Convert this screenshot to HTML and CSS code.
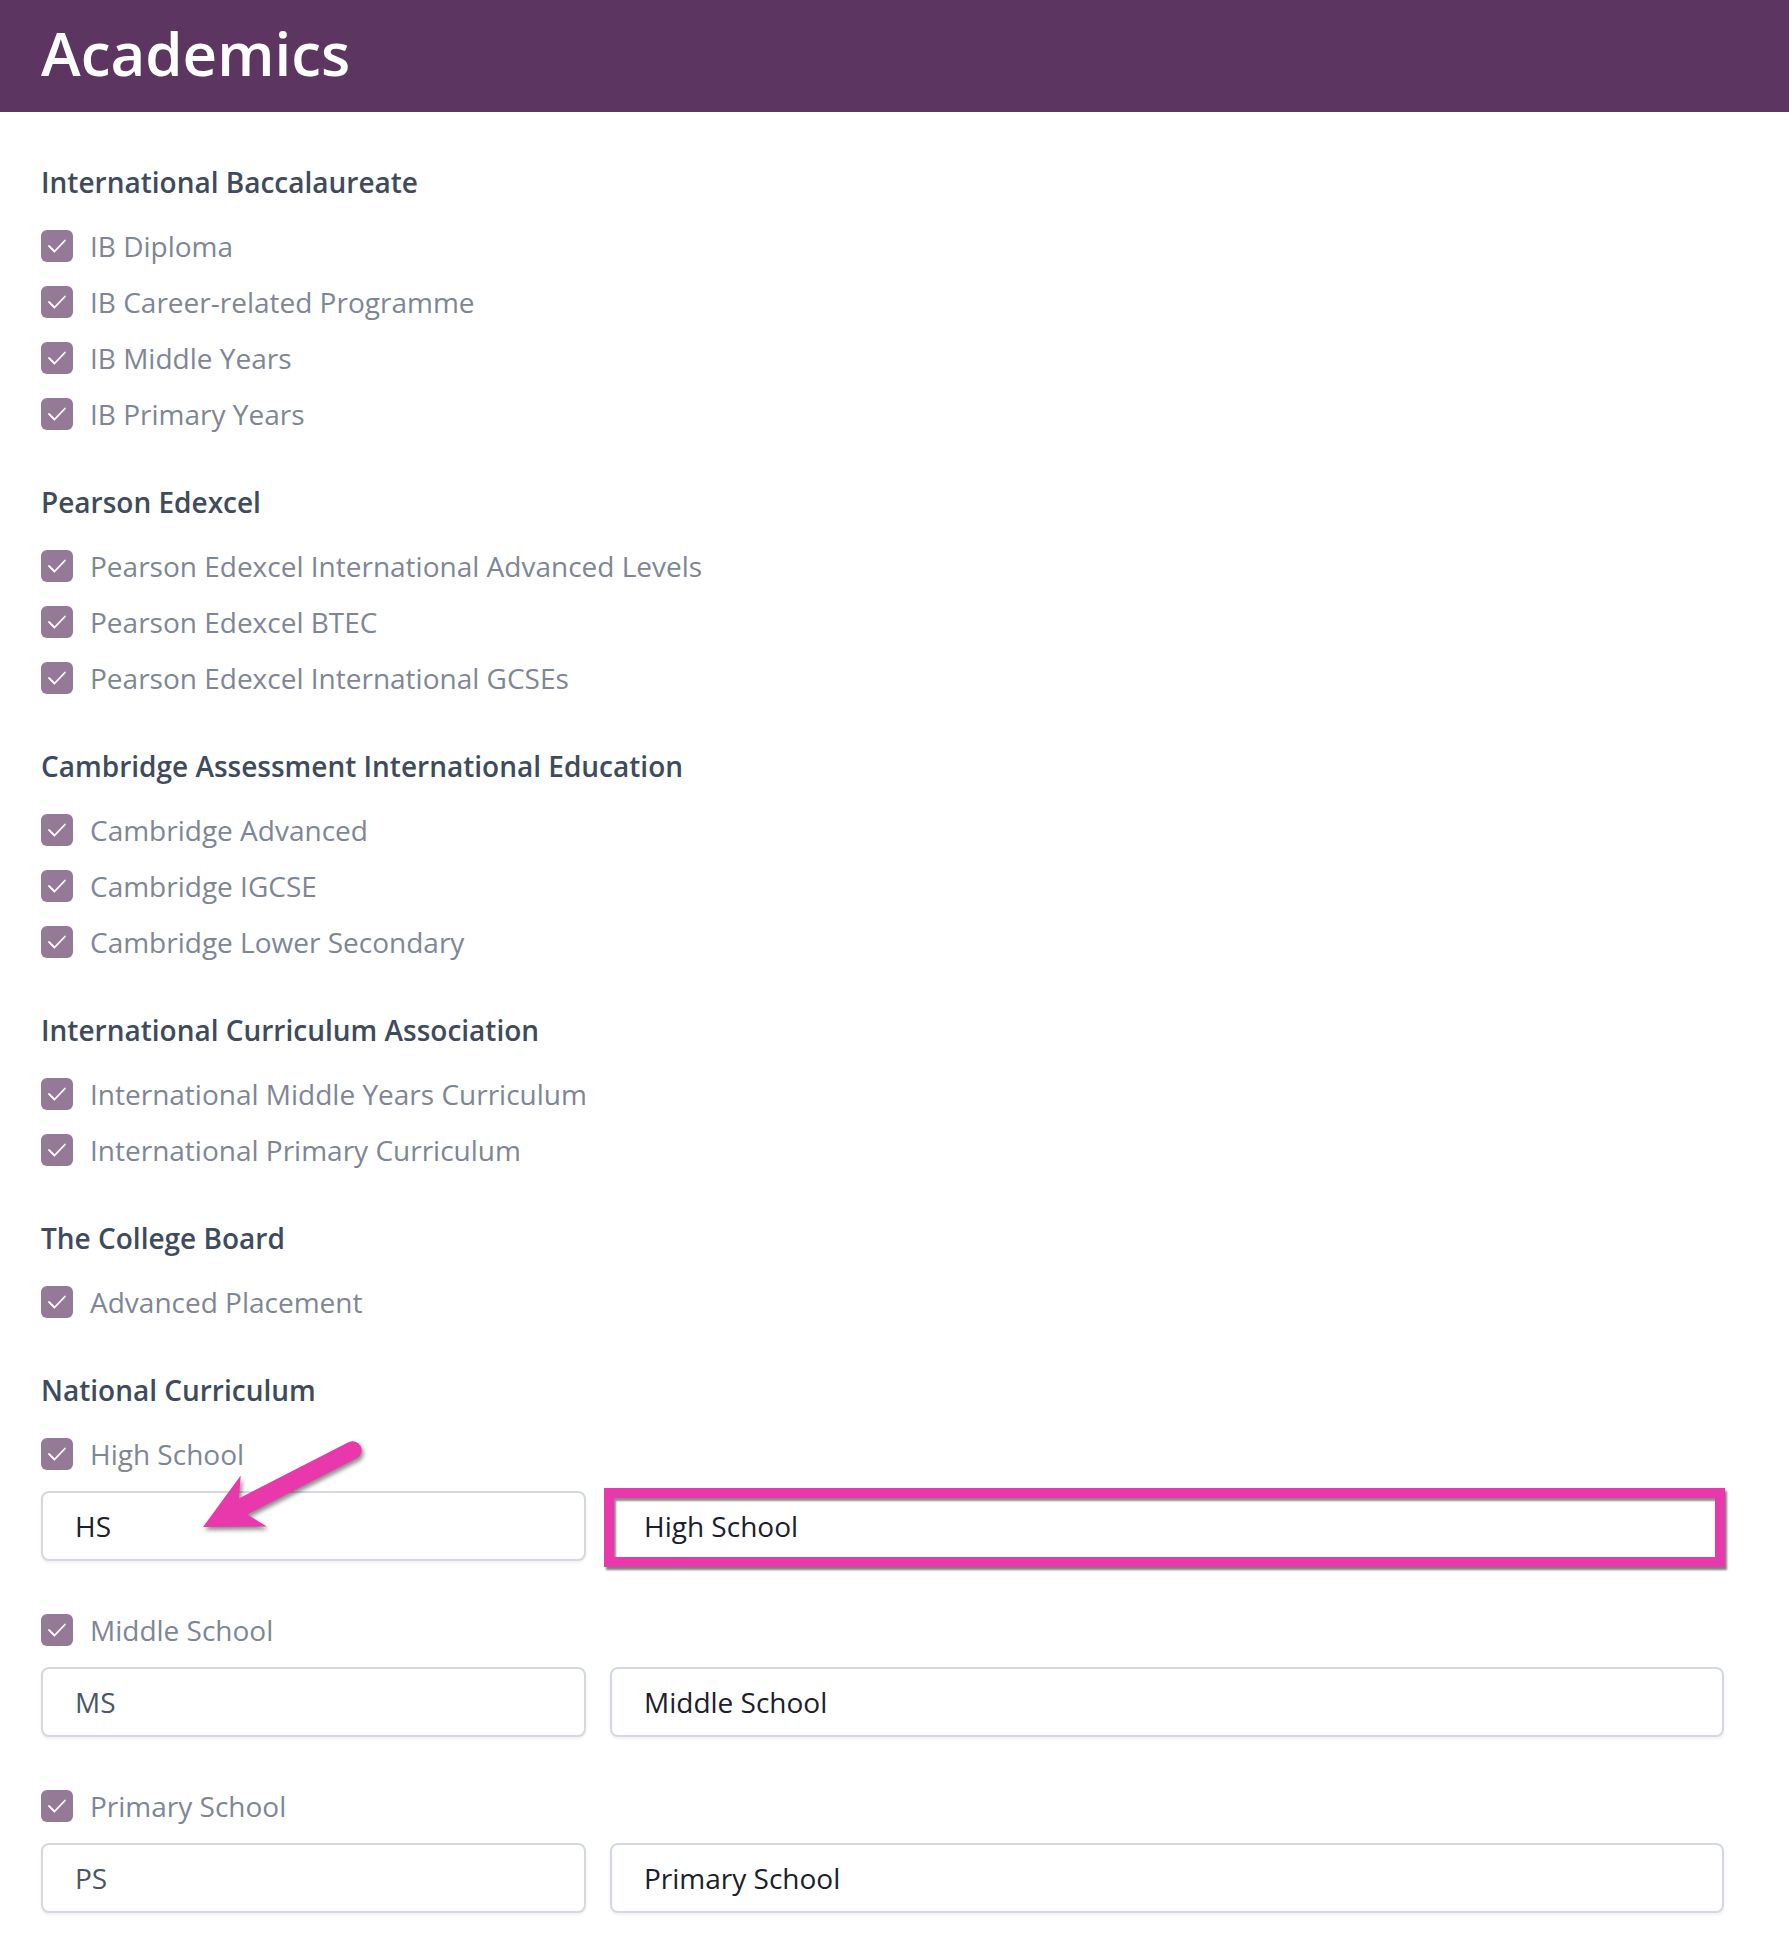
FILE: index.html
```html
<!DOCTYPE html>
<html lang="en">
	<head>
		<meta charset="UTF-8" />
		<meta name="viewport" content="width=device-width, initial-scale=1.0" />
		<title>Academics</title>
		<link rel="stylesheet" href="styles.css">
	</head>
	<body>
		<header class="page-header">
			<h1>Academics</h1>
		</header>

		<main class="content">
			<section class="group">
				<h2 class="group-title">International Baccalaureate</h2>
				<label class="check"><span class="box"><svg viewBox="0 0 32 32"><polyline points="8,16 13.5,21.5 24,10.5" /></svg></span>IB Diploma</label>
				<label class="check"><span class="box"><svg viewBox="0 0 32 32"><polyline points="8,16 13.5,21.5 24,10.5" /></svg></span>IB Career-related Programme</label>
				<label class="check"><span class="box"><svg viewBox="0 0 32 32"><polyline points="8,16 13.5,21.5 24,10.5" /></svg></span>IB Middle Years</label>
				<label class="check"><span class="box"><svg viewBox="0 0 32 32"><polyline points="8,16 13.5,21.5 24,10.5" /></svg></span>IB Primary Years</label>
			</section>

			<section class="group">
				<h2 class="group-title">Pearson Edexcel</h2>
				<label class="check"><span class="box"><svg viewBox="0 0 32 32"><polyline points="8,16 13.5,21.5 24,10.5" /></svg></span>Pearson Edexcel International Advanced Levels</label>
				<label class="check"><span class="box"><svg viewBox="0 0 32 32"><polyline points="8,16 13.5,21.5 24,10.5" /></svg></span>Pearson Edexcel BTEC</label>
				<label class="check"><span class="box"><svg viewBox="0 0 32 32"><polyline points="8,16 13.5,21.5 24,10.5" /></svg></span>Pearson Edexcel International GCSEs</label>
			</section>

			<section class="group">
				<h2 class="group-title">Cambridge Assessment International Education</h2>
				<label class="check"><span class="box"><svg viewBox="0 0 32 32"><polyline points="8,16 13.5,21.5 24,10.5" /></svg></span>Cambridge Advanced</label>
				<label class="check"><span class="box"><svg viewBox="0 0 32 32"><polyline points="8,16 13.5,21.5 24,10.5" /></svg></span>Cambridge IGCSE</label>
				<label class="check"><span class="box"><svg viewBox="0 0 32 32"><polyline points="8,16 13.5,21.5 24,10.5" /></svg></span>Cambridge Lower Secondary</label>
			</section>

			<section class="group">
				<h2 class="group-title">International Curriculum Association</h2>
				<label class="check"><span class="box"><svg viewBox="0 0 32 32"><polyline points="8,16 13.5,21.5 24,10.5" /></svg></span>International Middle Years Curriculum</label>
				<label class="check"><span class="box"><svg viewBox="0 0 32 32"><polyline points="8,16 13.5,21.5 24,10.5" /></svg></span>International Primary Curriculum</label>
			</section>

			<section class="group">
				<h2 class="group-title">The College Board</h2>
				<label class="check"><span class="box"><svg viewBox="0 0 32 32"><polyline points="8,16 13.5,21.5 24,10.5" /></svg></span>Advanced Placement</label>
			</section>

			<section class="group">
				<h2 class="group-title">National Curriculum</h2>

				<div class="school">
					<label class="check"><span class="box"><svg viewBox="0 0 32 32"><polyline points="8,16 13.5,21.5 24,10.5" /></svg></span>High School</label>
					<div class="school-fields">
						<input class="field field-short active" type="text" value="HS" />
						<div class="field-wrap">
							<input class="field" type="text" value="High School" />
							<span class="highlight"></span>
						</div>
					</div>
					<!-- pointer arrow -->
					<svg class="pointer" viewBox="0 0 170 100" width="170" height="100">
						<path d="M3 91 L40.7 39.6 L38.9 62.4 L148.9 6 A9 9 0 0 1 157.1 22 L47.2 78.4 L66.7 90.4 Z" />
					</svg>
				</div>

				<div class="school">
					<label class="check"><span class="box"><svg viewBox="0 0 32 32"><polyline points="8,16 13.5,21.5 24,10.5" /></svg></span>Middle School</label>
					<div class="school-fields">
						<input class="field field-short" type="text" value="MS" />
						<div class="field-wrap">
							<input class="field" type="text" value="Middle School" />
						</div>
					</div>
				</div>

				<div class="school">
					<label class="check"><span class="box"><svg viewBox="0 0 32 32"><polyline points="8,16 13.5,21.5 24,10.5" /></svg></span>Primary School</label>
					<div class="school-fields">
						<input class="field field-short" type="text" value="PS" />
						<div class="field-wrap">
							<input class="field" type="text" value="Primary School" />
						</div>
					</div>
				</div>
			</section>
		</main>
	</body>
</html>
```

FILE: styles.css
```css
body {
	font-family: "Open Sans", "Noto Sans", sans-serif;
	background-color: #fff;
	margin: 0;
	padding: 0;
}

.page-header {
	background-color: #5d3561;
	height: 112px;
	box-sizing: border-box;
	padding: 23px 0 0 41px;
}

.page-header h1 {
	margin: 0;
	color: #fff;
	font-size: 60px;
	font-weight: 600;
	line-height: 1;
}

.content {
	padding: 50px 65px 40px 41px;
}

.group {
	margin-bottom: 40px;
}

.group-title {
	margin: 0 0 16px;
	font-size: 28px;
	line-height: 40px;
	font-weight: 600;
	color: #3e4b5e;
}

.check {
	display: flex;
	align-items: center;
	height: 56px;
	font-size: 28px;
	color: #7e8696;
}

.box {
	width: 32px;
	height: 32px;
	border-radius: 6px;
	background-color: #957a97;
	margin-right: 17px;
	flex-shrink: 0;
	display: flex;
}

.box svg {
	width: 32px;
	height: 32px;
}

.box polyline {
	fill: none;
	stroke: #fff;
	stroke-width: 1.8;
	stroke-linecap: round;
	stroke-linejoin: round;
}

.school {
	position: relative;
	margin-bottom: 41px;
}

.school:last-child {
	margin-bottom: 0;
}

.school-fields {
	display: grid;
	grid-template-columns: 545px 1fr;
	gap: 24px;
	margin-top: 9px;
}

.field {
	display: block;
	width: 100%;
	height: 70px;
	box-sizing: border-box;
	padding: 0 32px;
	border: 2px solid #d4d8e1;
	border-radius: 8px;
	box-shadow: 0 2px 3px rgba(0, 0, 0, 0.06);
	font-family: "Open Sans", "Noto Sans", sans-serif;
	font-size: 28px;
	color: #1a202c;
	background-color: #fff;
	outline: none;
}

.field-short {
	color: #4a5568;
}

.field-short.active {
	color: #1a202c;
}

.field-wrap {
	position: relative;
}

/* pink annotation frame over the long field */
.highlight {
	position: absolute;
	left: -6px;
	top: -3px;
	right: -1px;
	bottom: -6px;
	border: 10px solid #e838ab;
	box-shadow: 2px 3px 2px rgba(0, 0, 0, 0.5), inset 2px 3px 2px rgba(0, 0, 0, 0.45);
	pointer-events: none;
}

.pointer {
	position: absolute;
	left: 159px;
	top: 10px;
	overflow: visible;
	filter: drop-shadow(2px 3px 2px rgba(0, 0, 0, 0.45));
}

.pointer path {
	fill: #e838ab;
}
```
